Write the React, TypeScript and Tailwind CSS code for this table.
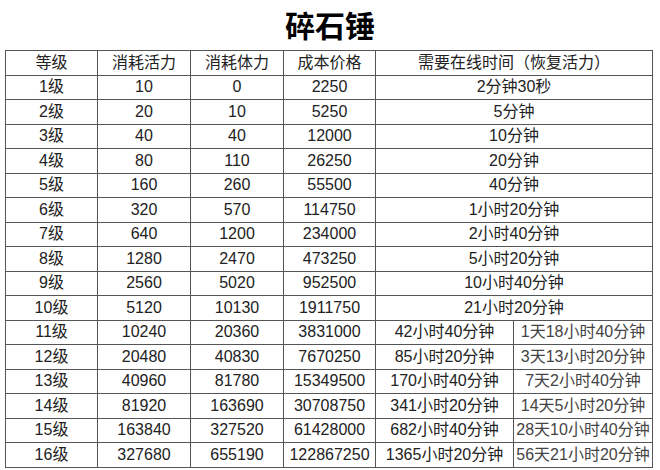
const rows: [string, string, string, string, string, string?][] = [
  ['1级', '10', '0', '2250', '2分钟30秒'],
  ['2级', '20', '10', '5250', '5分钟'],
  ['3级', '40', '40', '12000', '10分钟'],
  ['4级', '80', '110', '26250', '20分钟'],
  ['5级', '160', '260', '55500', '40分钟'],
  ['6级', '320', '570', '114750', '1小时20分钟'],
  ['7级', '640', '1200', '234000', '2小时40分钟'],
  ['8级', '1280', '2470', '473250', '5小时20分钟'],
  ['9级', '2560', '5020', '952500', '10小时40分钟'],
  ['10级', '5120', '10130', '1911750', '21小时20分钟'],
  ['11级', '10240', '20360', '3831000', '42小时40分钟', '1天18小时40分钟'],
  ['12级', '20480', '40830', '7670250', '85小时20分钟', '3天13小时20分钟'],
  ['13级', '40960', '81780', '15349500', '170小时40分钟', '7天2小时40分钟'],
  ['14级', '81920', '163690', '30708750', '341小时20分钟', '14天5小时20分钟'],
  ['15级', '163840', '327520', '61428000', '682小时40分钟', '28天10小时40分钟'],
  ['16级', '327680', '655190', '122867250', '1365小时20分钟', '56天21小时20分钟'],
]

const cell = 'border border-[#555] text-center h-[24.5px] p-0 leading-none'

export default function App() {
  return (
    <div
      className="w-[660px] h-[470px] bg-white text-[#222] overflow-hidden"
      style={{ fontFamily: '"Liberation Sans", "Noto Sans CJK SC", sans-serif' }}
    >
      <h1 className="h-[50px] pt-[9px] text-center text-[30px] font-bold leading-[36px] text-black">碎石锤</h1>
      <table className="ml-[5px] w-[647px] border-collapse table-fixed text-[16px]">
        <colgroup>
          <col className="w-[92px]" />
          <col className="w-[93px]" />
          <col className="w-[93px]" />
          <col className="w-[92px]" />
          <col className="w-[138px]" />
          <col className="w-[139px]" />
        </colgroup>
        <thead>
          <tr>
            <th className={cell + ' font-normal'}>等级</th>
            <th className={cell + ' font-normal'}>消耗活力</th>
            <th className={cell + ' font-normal'}>消耗体力</th>
            <th className={cell + ' font-normal'}>成本价格</th>
            <th className={cell + ' font-normal'} colSpan={2}>需要在线时间（恢复活力）</th>
          </tr>
        </thead>
        <tbody>
          {rows.map((r) => (
            <tr key={r[0]}>
              <td className={cell}>{r[0]}</td>
              <td className={cell}>{r[1]}</td>
              <td className={cell}>{r[2]}</td>
              <td className={cell}>{r[3]}</td>
              {r[5] ? (
                <>
                  <td className={cell}>{r[4]}</td>
                  <td className={cell + ' text-[#444]'}>{r[5]}</td>
                </>
              ) : (
                <td className={cell} colSpan={2}>{r[4]}</td>
              )}
            </tr>
          ))}
        </tbody>
      </table>
    </div>
  )
}
